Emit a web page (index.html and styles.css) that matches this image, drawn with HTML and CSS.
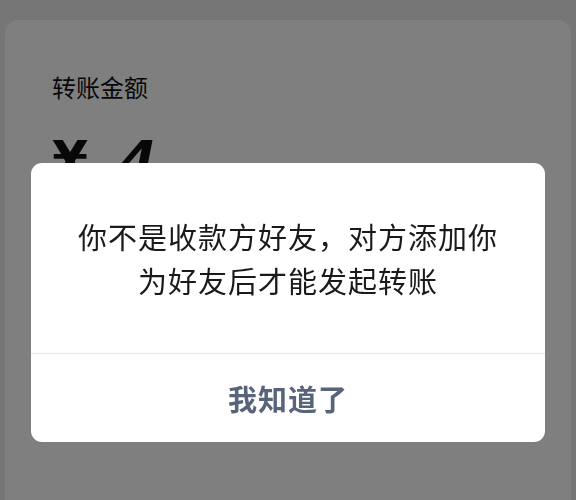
FILE: index.html
```html
<!DOCTYPE html>
<html lang="zh-CN">
<head>
  <meta charset="UTF-8">
  <meta name="viewport" content="width=device-width, initial-scale=1.0">
  <title>转账</title>
  <link rel="stylesheet" href="styles.css">
</head>
<body>
  <div class="page">
    <div class="card">
      <div class="label">转账金额</div>
      <div class="amount"><span class="currency">¥</span><span class="digits">4</span></div>
    </div>
  </div>

  <div class="mask"></div>
  <div class="dialog">
    <div class="dialog-body">
      <p>你不是收款方好友，对方添加你<br>为好友后才能发起转账</p>
    </div>
    <button class="dialog-btn">我知道了</button>
  </div>
</body>
</html>
```

FILE: styles.css
```css
body {
  margin: 0;
  background-color: #ededed;
  font-family: "Noto Sans CJK SC", "Noto Sans", sans-serif;
  height: 500px;
  overflow: hidden;
}

.page {
  padding: 20px 5px 0;
  height: 480px;
}

.card {
  height: 100%;
  background: #fff;
  border-radius: 14px 14px 0 0;
  padding: 49px 47px 0;
  box-sizing: border-box;
}

.label {
  font-size: 24px;
  line-height: 36px;
  color: #111;
}

.amount {
  margin-top: 25px;
  display: flex;
  gap: 32px;
  font-family: "DejaVu Sans", sans-serif;
  font-weight: bold;
  font-size: 52px;
  line-height: 60px;
  color: #111;
}

.digits {
  font-style: italic;
}

/* grey mask over the page */
.mask {
  position: fixed;
  inset: 0;
  background: rgba(0, 0, 0, 0.5);
}

.dialog {
  position: fixed;
  top: 163px;
  left: 31px;
  width: 514px;
  height: 279px;
  background: #fff;
  border-radius: 11px;
  display: flex;
  flex-direction: column;
  overflow: hidden;
}

.dialog-body {
  height: 190px;
  display: flex;
  align-items: center;
  justify-content: center;
  border-bottom: 1px solid #e8e8e8;
}

.dialog-body p {
  margin: 0;
  text-align: center;
  font-size: 29px;
  line-height: 44px;
  letter-spacing: 1px;
  color: #1a1a1a;
}

.dialog-btn {
  flex: 1;
  border: none;
  background: none;
  font-family: inherit;
  font-size: 29px;
  font-weight: bold;
  letter-spacing: 1px;
  color: #58647a;
  padding: 0;
  cursor: pointer;
}
```
